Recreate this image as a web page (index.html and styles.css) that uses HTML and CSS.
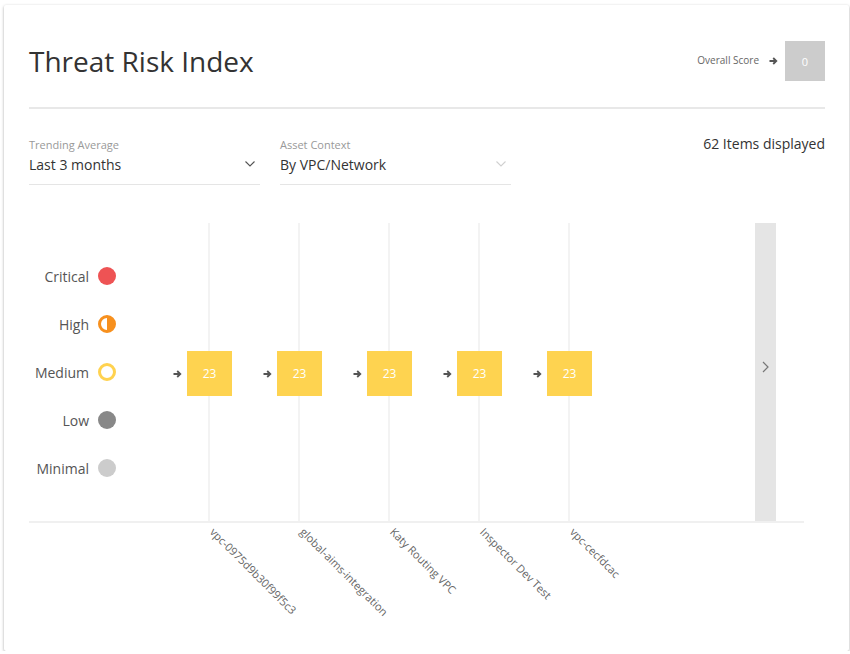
FILE: index.html
```html
<!DOCTYPE html>
<html>
<head>
<meta charset="utf-8">
<link rel="stylesheet" href="styles.css">
</head>
<body>
<div class="card">
  <div class="header">
    <h1 class="title">Threat Risk Index</h1>
    <div class="score">
      <span class="score-label">Overall Score</span>
      <svg class="arrow" width="9" height="8" viewBox="0 0 9 8"><path d="M0.5 4H7M4.2 1L7.3 4L4.2 7" fill="none" stroke="#555" stroke-width="1.8"/></svg>
      <div class="score-box">0</div>
    </div>
  </div>
  <div class="filters">
    <div class="select">
      <div class="select-label">Trending Average</div>
      <div class="select-value"><span>Last 3 months</span>
        <svg width="10" height="6" viewBox="0 0 10 6"><path d="M0.5 0.5L5 5L9.5 0.5" fill="none" stroke="#555" stroke-width="1.1"/></svg>
      </div>
    </div>
    <div class="select">
      <div class="select-label">Asset Context</div>
      <div class="select-value"><span>By VPC/Network</span>
        <svg width="10" height="6" viewBox="0 0 10 6"><path d="M0.5 0.5L5 5L9.5 0.5" fill="none" stroke="#d0d0d0" stroke-width="1.1"/></svg>
      </div>
    </div>
    <div class="count">62 Items displayed</div>
  </div>
  <div class="chart">
    <div class="legend">
      <div class="legend-item"><span>Critical</span><span class="dot critical"></span></div>
      <div class="legend-item"><span>High</span><span class="dot high"></span></div>
      <div class="legend-item"><span>Medium</span><span class="dot medium"></span></div>
      <div class="legend-item"><span>Low</span><span class="dot low"></span></div>
      <div class="legend-item"><span>Minimal</span><span class="dot minimal"></span></div>
    </div>
    <div class="col"><div class="cell"><svg class="arrow" width="9" height="8" viewBox="0 0 9 8"><path d="M0.5 4H7M4.2 1L7.3 4L4.2 7" fill="none" stroke="#555" stroke-width="1.8"/></svg><div class="box">23</div></div></div>
    <div class="col"><div class="cell"><svg class="arrow" width="9" height="8" viewBox="0 0 9 8"><path d="M0.5 4H7M4.2 1L7.3 4L4.2 7" fill="none" stroke="#555" stroke-width="1.8"/></svg><div class="box">23</div></div></div>
    <div class="col"><div class="cell"><svg class="arrow" width="9" height="8" viewBox="0 0 9 8"><path d="M0.5 4H7M4.2 1L7.3 4L4.2 7" fill="none" stroke="#555" stroke-width="1.8"/></svg><div class="box">23</div></div></div>
    <div class="col"><div class="cell"><svg class="arrow" width="9" height="8" viewBox="0 0 9 8"><path d="M0.5 4H7M4.2 1L7.3 4L4.2 7" fill="none" stroke="#555" stroke-width="1.8"/></svg><div class="box">23</div></div></div>
    <div class="col"><div class="cell"><svg class="arrow" width="9" height="8" viewBox="0 0 9 8"><path d="M0.5 4H7M4.2 1L7.3 4L4.2 7" fill="none" stroke="#555" stroke-width="1.8"/></svg><div class="box">23</div></div></div>
    <div class="spacer"></div>
    <div class="scroll">
      <svg width="7" height="12" viewBox="0 0 7 12"><path d="M1 1L6 6L1 11" fill="none" stroke="#777" stroke-width="1.2"/></svg>
    </div>
  </div>
  <div class="labels">
    <div class="label-col"><span class="label">vpc-0975d9b30f99f5c3</span></div>
    <div class="label-col"><span class="label">global-aims-integration</span></div>
    <div class="label-col"><span class="label">Katy Routing VPC</span></div>
    <div class="label-col"><span class="label">Inspector Dev Test</span></div>
    <div class="label-col"><span class="label">vpc-cecfdcac</span></div>
  </div>
</div>
</body>
</html>
```
FILE: styles.css
```css
* { box-sizing: border-box; }
html, body { margin: 0; padding: 0; background: #fff; }
body {
  font-family: "Open Sans", "Liberation Sans", sans-serif;
  color: #333;
  padding: 5px 1px 0 4px;
}
.card {
  width: 845px;
  height: 646px;
  background: #fff;
  border-radius: 2px;
  box-shadow: 0 1px 3px rgba(0,0,0,0.35);
  padding: 36px 24px 0 25px;
  overflow: hidden;
}
.header {
  display: flex;
  align-items: center;
  justify-content: space-between;
  height: 40px;
  margin-bottom: 26px;
}
.title {
  margin: 0;
  font-size: 28px;
  font-weight: 400;
  color: #333;
  line-height: 40px;
}
.score {
  display: flex;
  align-items: center;
}
.score-label {
  font-size: 10px;
  color: #666;
  margin-right: 10px;
  margin-top: -2px;
}
.score .arrow { margin-right: 7px; }
.score-box {
  width: 40px;
  height: 40px;
  background: #cccccc;
  color: #fff;
  font-size: 11px;
  display: flex;
  align-items: center;
  justify-content: center;
}
.filters {
  border-top: 2px solid #e8e8e8;
  display: flex;
  padding-top: 29px;
}
.select {
  width: 231px;
  margin-right: 20px;
  border-bottom: 1px solid #e5e5e5;
  padding-bottom: 8px;
}
.select-label {
  font-size: 11px;
  color: #999;
  line-height: 14px;
}
.select-value {
  display: flex;
  justify-content: space-between;
  align-items: center;
  font-size: 14px;
  color: #333;
  line-height: 22px;
  margin-top: 2px;
  padding-right: 5px;
}
.select-value svg { margin-top: -2px; }
.count {
  margin-left: auto;
  font-size: 14px;
  color: #333;
  line-height: 16px;
  margin-top: -2px;
}
.chart {
  display: flex;
  height: 300px;
  margin-top: 38px;
  margin-right: 21px;
  border-bottom: 2px solid #f0f0f0;
}
.legend {
  width: 135px;
  display: flex;
  flex-direction: column;
  justify-content: center;
  gap: 30px;
}
.legend-item {
  display: flex;
  align-items: center;
  justify-content: flex-end;
  width: 87px;
  font-size: 14px;
  color: #555;
  height: 18px;
}
.legend-item span:first-child { margin-right: 9px; }
.dot {
  flex: none;
  width: 18px;
  height: 18px;
  border-radius: 50%;
}
.critical { background: #ee5354; }
.high { border: 3px solid #f7901e; background: linear-gradient(to right, #fff 50%, #f7901e 50%); }
.medium { border: 3px solid #ffd24f; background: #fff; }
.low { background: #888; }
.minimal { background: #cccccc; }
.col {
  width: 90px;
  display: flex;
  align-items: center;
  background: linear-gradient(to right, transparent 44px, #f3f3f3 44px, #f3f3f3 46px, transparent 46px);
}
.cell {
  display: flex;
  align-items: center;
  padding-left: 9px;
  margin-top: 3px;
}
.cell .arrow { margin-right: 5px; }
.box {
  width: 45px;
  height: 45px;
  background: #fed350;
  color: #fff;
  font-size: 12px;
  display: flex;
  align-items: center;
  justify-content: center;
}
.spacer { flex: 1; }
.scroll {
  width: 21px;
  margin-right: 28px;
  background: #e5e5e5;
  display: flex;
  align-items: center;
  justify-content: center;
  padding-bottom: 10px;
}
.labels {
  display: flex;
  padding-left: 135px;
}
.label-col {
  width: 90px;
  padding-left: 53px;
  padding-top: 2px;
}
.label {
  display: block;
  white-space: nowrap;
  font-size: 11px;
  color: #666;
  line-height: 14px;
  transform-origin: 0 0;
  transform: rotate(45deg);
}
```
